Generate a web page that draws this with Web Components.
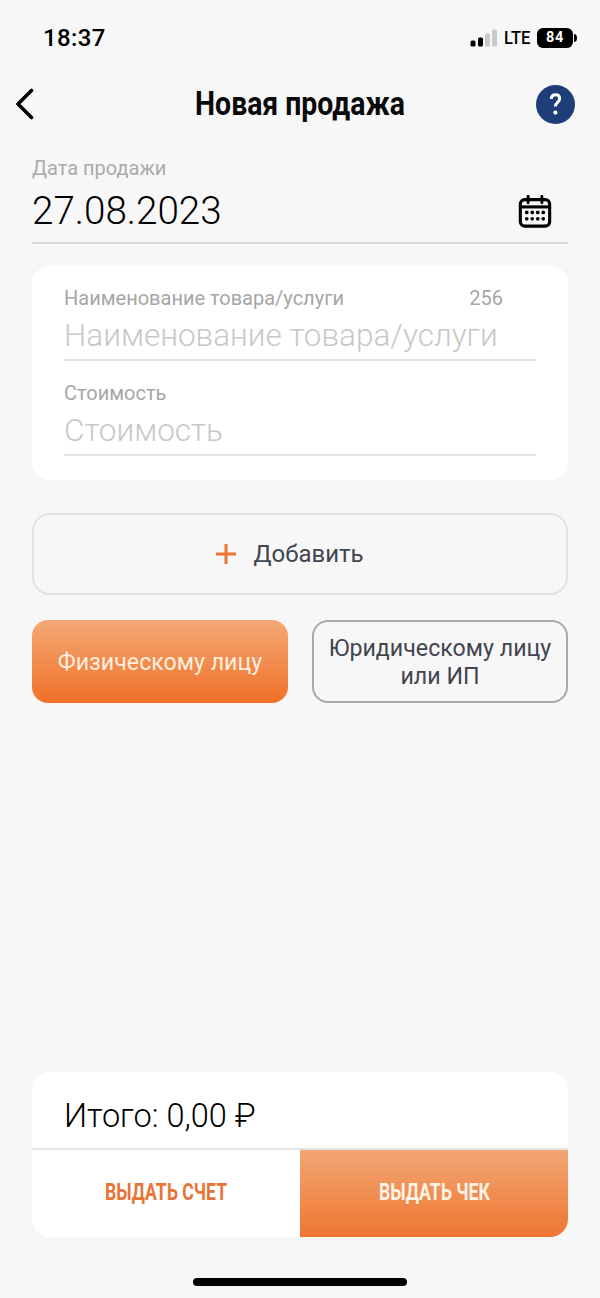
<!DOCTYPE html>
<html lang="ru">
<head>
<meta charset="utf-8">
<title>Новая продажа</title>
<style>
  html, body { margin: 0; padding: 0; height: 100%; }
  body { background: #f7f7f8; font-family: Roboto, "Liberation Sans", sans-serif; }
  sale-page { height: 1298px; }
</style>
</head>
<body>
<sale-page>
  <status-bar slot="top"></status-bar>
  <nav-header slot="top">Новая продажа</nav-header>
  <date-field slot="top" label="Дата продажи">27.08.2023</date-field>
  <goods-card slot="top">
    <text-field label="Наименование товара/услуги" counter="256" placeholder="Наименование товара/услуги"></text-field>
    <text-field label="Стоимость" placeholder="Стоимость"></text-field>
  </goods-card>
  <add-button slot="top">Добавить</add-button>
  <buyer-switch slot="top">
    <buyer-button active>Физическому лицу</buyer-button>
    <buyer-button>Юридическому лицу<br>или ИП</buyer-button>
  </buyer-switch>
  <total-card slot="bottom" total="Итого: 0,00 ₽"></total-card>
  <home-bar slot="bottom"></home-bar>
</sale-page>

<script>
const define = (name, html, init) => {
  customElements.define(name, class extends HTMLElement {
    constructor() {
      super();
      this.attachShadow({ mode: 'open' }).innerHTML = html;
    }

    connectedCallback() {
      if (init) init(this, this.shadowRoot);
    }
  });
};

define('sale-page', `
  <style>
    :host { display: flex; flex-direction: column; justify-content: space-between; box-sizing: border-box; }
    .top, .bottom { display: flex; flex-direction: column; }
  </style>
  <div class="top"><slot name="top"></slot></div>
  <div class="bottom"><slot name="bottom"></slot></div>
`);

define('status-bar', `
  <style>
    :host { display: flex; align-items: center; justify-content: space-between; height: 34px; padding: 21px 23px 0 43px; color: #000; }
    .time { font: 500 24px/34px Roboto, sans-serif; letter-spacing: 0.4px; }
    .right { display: flex; align-items: center; }
    .lte { font: 500 18px/20px Roboto, sans-serif; margin: 0 5px 0 6px; transform: scaleX(.92); transform-origin: left center; width: 28px; }
    .bat { width: 36px; height: 20px; border-radius: 6px; background: #000; color: #fff; font: 700 14.5px/20px Roboto, sans-serif; text-align: center; letter-spacing: .8px; }
    svg { display: block; }
  </style>
  <span class="time">18:37</span>
  <span class="right">
    <svg width="28" height="18" viewBox="0 0 28 18">
      <rect x="0.5" y="11.5" width="5" height="6" rx="1.5" fill="#000"/>
      <rect x="8" y="8.5" width="5" height="9" rx="1.5" fill="#000"/>
      <rect x="15" y="4.5" width="5" height="13" rx="1.5" fill="#c9c9c9"/>
      <rect x="22" y="0.5" width="5" height="17" rx="1.5" fill="#c9c9c9"/>
    </svg>
    <span class="lte">LTE</span>
    <span class="bat">84</span>
    <svg width="3" height="8" viewBox="0 0 3 8" style="margin-left:1px"><path d="M0 0a3 4 0 0 1 0 8z" fill="#000"/></svg>
  </span>
`);

define('nav-header', `
  <style>
    :host { display: grid; grid-template-columns: 1fr auto 1fr; align-items: center; height: 44px; margin-top: 27px; padding: 0 25px; }
    .title { font: 700 33px/44px Roboto, sans-serif; color: #0a0a0a; transform: scaleX(.86); white-space: nowrap; }
    svg { display: block; }
    .back { margin-left: -11px; }
    .help { justify-self: end; }
  </style>
  <svg class="back" width="20" height="32" viewBox="0 0 20 32"><path d="M17.5 2.5 4 16l13.5 13.5" fill="none" stroke="#000" stroke-width="3.6" stroke-linecap="round" stroke-linejoin="round"/></svg>
  <span class="title"><slot></slot></span>
  <svg class="help" width="39" height="39" viewBox="0 0 39 39" role="img" aria-label="?">
    <circle cx="19.5" cy="19.5" r="19.5" fill="#1f3d78"/>
    <path d="M15.3 14c0-2.8 1.7-4.2 4.2-4.2 2.4 0 4.1 1.5 4.1 3.9 0 1.8-.9 2.8-2.2 3.9-1.3 1.1-2 2-2 3.9" fill="none" stroke="#fff" stroke-width="3"/>
    <circle cx="19.4" cy="27.6" r="2.1" fill="#fff"/>
  </svg>
`);

define('date-field', `
  <style>
    :host { display: block; margin: 31px 32px 0; height: 87px; box-sizing: border-box; border-bottom: 2px solid #d9d9d9; }
    .label { font: 400 20px/22px Roboto, sans-serif; color: #ababab; }
    .row { display: flex; align-items: center; justify-content: space-between; padding-right: 16px; height: 44px; margin-top: 10px; }
    .value { font: 300 38.6px/44px Roboto, sans-serif; color: #000; }
    svg { display: block; }
  </style>
  <div class="label"></div>
  <div class="row">
    <span class="value"><slot></slot></span>
    <svg width="34" height="33" viewBox="0 0 36 36" fill="none">
      <rect x="2" y="5" width="32" height="29" rx="5" stroke="#000" stroke-width="3.4"/>
      <path d="M2 13h32" stroke="#000" stroke-width="3.4"/>
      <path d="M10.5 1.5v7M25.5 1.5v7" stroke="#000" stroke-width="3.2" stroke-linecap="round"/>
      <g fill="#000">
        <circle cx="9" cy="19" r="2"/><circle cx="15" cy="19" r="2"/><circle cx="21" cy="19" r="2"/><circle cx="27" cy="19" r="2"/>
        <circle cx="9" cy="26" r="2"/><circle cx="15" cy="26" r="2"/><circle cx="21" cy="26" r="2"/><circle cx="27" cy="26" r="2"/>
      </g>
    </svg>
  </div>
`, (el, root) => {
  root.querySelector('.label').textContent = el.getAttribute('label');
});

define('goods-card', `
  <style>
    :host { display: flex; flex-direction: column; gap: 22px; margin: 22px 32px 0; padding: 22px 32px 24px; background: #fff; border-radius: 18px; }
  </style>
  <slot></slot>
`);

define('text-field', `
  <style>
    :host { display: block; height: 73px; box-sizing: border-box; border-bottom: 2px solid #e4e4e4; }
    .top { display: flex; justify-content: space-between; margin-top: -2px; padding-right: 33px; font: 400 20px/24px Roboto, sans-serif; color: #a6a6a6; }
    .input { font: 300 31.5px/44px Roboto, sans-serif; color: #c8c8c8; margin-top: 4px; white-space: nowrap; }
  </style>
  <div class="top"><span class="label"></span><span class="counter"></span></div>
  <div class="input"></div>
`, (el, root) => {
  root.querySelector('.label').textContent = el.getAttribute('label');
  root.querySelector('.counter').textContent = el.getAttribute('counter') || '';
  root.querySelector('.input').textContent = el.getAttribute('placeholder');
});

define('add-button', `
  <style>
    :host { display: flex; align-items: center; justify-content: center; gap: 17px; margin: 33px 32px 0; height: 82px; box-sizing: border-box; padding-right: 20px; border: 2px solid #e3e3e3; border-radius: 18px; font: 400 24px/30px Roboto, sans-serif; color: #41454f; }
    svg { display: block; }
  </style>
  <svg width="20" height="20" viewBox="0 0 20 20"><path d="M10 0v20M0 10h20" stroke="#ec7532" stroke-width="3"/></svg>
  <span><slot></slot></span>
`);

define('buyer-switch', `
  <style>
    :host { display: grid; grid-template-columns: 1fr 1fr; gap: 24px; margin: 25px 32px 0; }
  </style>
  <slot></slot>
`);

define('buyer-button', `
  <style>
    :host { display: flex; align-items: center; justify-content: center; height: 83px; box-sizing: border-box; border: 2px solid #a9a9a9; border-radius: 16px; font: 400 23.2px/28px Roboto, sans-serif; color: #41454f; text-align: center; }
    :host([active]) { border: 0; color: #ffeedd; background: linear-gradient(#f3a977, #f07027); }
  </style>
  <span><slot></slot></span>
`);

define('total-card', `
  <style>
    :host { display: block; margin: 0 32px; background: #fff; border-radius: 18px; overflow: hidden; }
    .total { height: 78px; box-sizing: border-box; padding: 0 32px; font: 300 32.5px/88px Roboto, sans-serif; color: #000; border-bottom: 2px solid #e4e4e4; }
    .actions { display: grid; grid-template-columns: 1fr 1fr; height: 87px; }
    .actions span { display: flex; align-items: center; justify-content: center; padding-bottom: 3px; }
    .actions b { font: 700 24px/30px Roboto, sans-serif; transform: scaleX(.735); white-space: nowrap; }
    .bill { color: #e87538; }
    .check { color: #fff3e6; background: linear-gradient(#f2a775, #ef7530); }
  </style>
  <div class="total"></div>
  <div class="actions">
    <span class="bill"><b>ВЫДАТЬ СЧЕТ</b></span>
    <span class="check"><b>ВЫДАТЬ ЧЕК</b></span>
  </div>
`, (el, root) => {
  root.querySelector('.total').textContent = el.getAttribute('total');
});

define('home-bar', `
  <style>
    :host { display: flex; justify-content: center; padding: 41px 0 12px; }
    div { width: 214px; height: 8px; border-radius: 4px; background: #000; }
  </style>
  <div></div>
`);
</script>
</body>
</html>
